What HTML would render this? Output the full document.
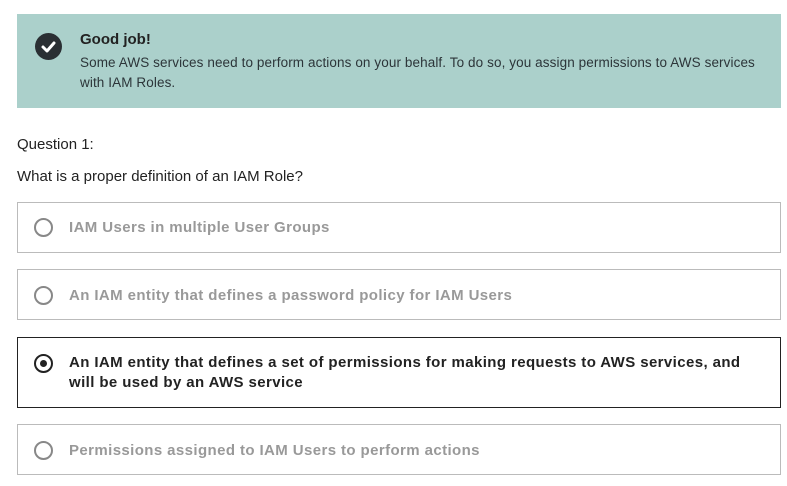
<!DOCTYPE html>
<html><head><style>
body{margin:0;width:787px;height:486px;background:#fff;font-family:"Liberation Sans",sans-serif;color:#232f3e;position:relative;overflow:hidden}
.ban{position:absolute;left:17px;top:14px;width:764px;height:94px;background:#abd0cb}
.ic{position:absolute;left:35px;top:33px;width:27px;height:27px;border-radius:50%;background:#2a2f33}
.t{position:absolute;left:80px;top:31px;font-weight:bold;font-size:15px;color:#222}
.b{position:absolute;left:80px;top:53px;font-size:13.5px;line-height:20px;color:#2c3539;width:690px;letter-spacing:0.1px}
.q{position:absolute;left:17px;font-size:15px;color:#222}
.o{position:absolute;left:17px;width:764px;border:1px solid #bbb;box-sizing:border-box}
.o .r{position:absolute;left:16px;width:19px;height:19px;border:2px solid #888;border-radius:50%;box-sizing:border-box}
.o .x{position:absolute;left:51px;font-weight:bold;font-size:15px;color:#999;line-height:20px;letter-spacing:0.4px}
.sel{border:1px solid #222}
.sel .r{border-color:#222}
.sel .r:after{content:"";position:absolute;left:4px;top:4px;width:7px;height:7px;border-radius:50%;background:#222}
.sel .x{color:#222}
</style></head><body>
<div class="ban"></div>
<div class="ic"><svg width="27" height="27" viewBox="0 0 27 27"><path d="M8 14l4 4 7-8" fill="none" stroke="#fff" stroke-width="3" stroke-linecap="round" stroke-linejoin="round"/></svg></div>
<div class="t">Good job!</div>
<div class="b">Some AWS services need to perform actions on your behalf. To do so, you assign permissions to AWS services with IAM Roles.</div>
<div class="q" style="top:136px">Question 1:</div>
<div class="q" style="top:168px">What is a proper definition of an IAM Role?</div>
<div class="o" style="top:202px;height:51px"><div class="r" style="top:15px"></div><div class="x" style="top:15px">IAM Users in multiple User Groups</div></div>
<div class="o" style="top:269px;height:51px"><div class="r" style="top:16px"></div><div class="x" style="top:16px">An IAM entity that defines a password policy for IAM Users</div></div>
<div class="o sel" style="top:337px;height:71px"><div class="r" style="top:16px"></div><div class="x" style="top:15px">An IAM entity that defines a set of permissions for making requests to AWS services, and<br>will be used by an AWS service</div></div>
<div class="o" style="top:424px;height:51px"><div class="r" style="top:16px"></div><div class="x" style="top:16px">Permissions assigned to IAM Users to perform actions</div></div>
</body></html>
